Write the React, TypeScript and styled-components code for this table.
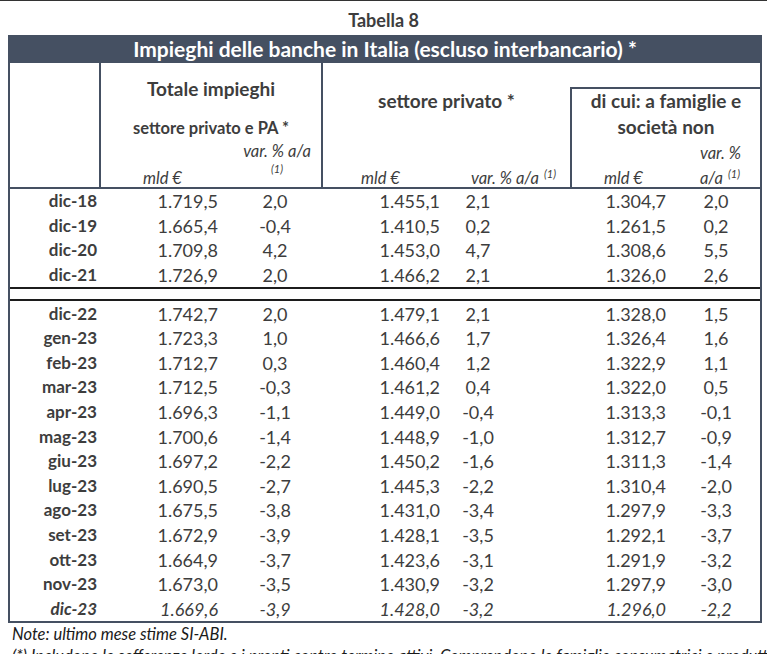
import React from 'react';
import styled, { createGlobalStyle } from 'styled-components';

const Global = createGlobalStyle`
  html, body { margin: 0; padding: 0; background: #ffffff; }
  body {
    font-family: Lato, "Open Sans", "DejaVu Sans", sans-serif;
    color: #404040;
  }
`;

const SLATE = '#455062';
const INK = '#3d3d3d';

const Page = styled.div`
  width: 767px;
  height: 654px;
  overflow: hidden;
  border-top: 1px solid #333;
  box-sizing: border-box;
`;

const Caption = styled.div`
  padding-top: 8px;
  height: 26px;
  line-height: 22px;
  text-align: center;
  font-weight: 700;
  font-size: 18px;
  color: ${INK};
`;

const Table = styled.div`
  margin-left: 8px;
  width: 754px;
  box-sizing: border-box;
  border: 2px solid ${SLATE};
  border-top: none;
`;

const TitleBar = styled.div`
  height: 28px;
  line-height: 28px;
  background: ${SLATE};
  color: #ffffff;
  text-align: center;
  font-weight: 700;
  font-size: 21px;
`;

const Header = styled.div`
  display: grid;
  grid-template-columns: 89px 222px 249px 1fr;
  height: 124px;
  border-bottom: 2px solid ${SLATE};
`;

const HeadCol = styled.div<{ $padTop?: number; $boxed?: boolean }>`
  display: flex;
  flex-direction: column;
  border-left: 2px solid ${SLATE};
  padding-top: ${(p) => p.$padTop ?? 0}px;
  margin-top: ${(p) => (p.$boxed ? 24 : 0)}px;
  border-top: ${(p) => (p.$boxed ? `2px solid ${SLATE}` : 'none')};
  min-width: 0;
`;

const HeadTitle = styled.div<{ $mt?: number; $size?: number }>`
  margin-top: ${(p) => p.$mt ?? 0}px;
  height: 24px;
  line-height: 24px;
  text-align: center;
  font-weight: 700;
  font-size: ${(p) => p.$size ?? 19}px;
  color: ${INK};
  white-space: nowrap;
`;

const UnitRow = styled.div<{ $pl: number; $pr: number }>`
  flex: 1;
  display: flex;
  justify-content: space-between;
  align-items: flex-end;
  padding: 0 ${(p) => p.$pr}px 0 ${(p) => p.$pl}px;
`;

const Unit = styled.span`
  font-style: italic;
  font-size: 16.5px;
  line-height: 18px;
  white-space: nowrap;
  color: ${INK};
`;

const VarStack = styled.div`
  align-self: flex-start;
  display: flex;
  flex-direction: column;
  align-items: center;
  padding-top: 2px;
`;

const SupLine = styled.span`
  margin-top: 3px;
  font-style: italic;
  font-size: 11px;
  line-height: 12px;
  color: ${INK};
`;

const Sup = styled.sup`
  font-size: 11px;
  margin-left: 5px;
  vertical-align: 6px;
  line-height: 0;
`;

const RightLine = styled.div<{ $mt: number; $pr: number }>`
  margin-top: ${(p) => p.$mt}px;
  padding-right: ${(p) => p.$pr}px;
  text-align: right;
`;

const Row = styled.div<{ $italic?: boolean }>`
  display: grid;
  grid-template-columns: 90px 130px 90px 130px 56px 174px 72px 1fr;
  align-items: center;
  height: 24.6px;
  font-size: 18px;
  line-height: 22px;
  color: ${INK};
  font-style: ${(p) => (p.$italic ? 'italic' : 'normal')};
`;

const Label = styled.span`
  text-align: right;
  padding-right: 3px;
  font-weight: 700;
  font-size: 17px;
`;

const Num = styled.span<{ $pr: number }>`
  text-align: right;
  padding-right: ${(p) => p.$pr}px;
`;

const Pct = styled.span`
  text-align: center;
`;

const Separator = styled.div`
  height: 10px;
  border-top: 2px solid #1c1c1c;
  border-bottom: 2px solid #1c1c1c;
`;

const Notes = styled.div`
  padding-left: 12px;
  font-style: italic;
  font-size: 16.5px;
  line-height: 22px;
  color: #1a1a1a;
  white-space: nowrap;
  overflow: hidden;
`;

type R = [string, string, string, string, string, string, string];

const top: R[] = [
  ['dic-18', '1.719,5', '2,0', '1.455,1', '2,1', '1.304,7', '2,0'],
  ['dic-19', '1.665,4', '-0,4', '1.410,5', '0,2', '1.261,5', '0,2'],
  ['dic-20', '1.709,8', '4,2', '1.453,0', '4,7', '1.308,6', '5,5'],
  ['dic-21', '1.726,9', '2,0', '1.466,2', '2,1', '1.326,0', '2,6'],
];

const bottom: R[] = [
  ['dic-22', '1.742,7', '2,0', '1.479,1', '2,1', '1.328,0', '1,5'],
  ['gen-23', '1.723,3', '1,0', '1.466,6', '1,7', '1.326,4', '1,6'],
  ['feb-23', '1.712,7', '0,3', '1.460,4', '1,2', '1.322,9', '1,1'],
  ['mar-23', '1.712,5', '-0,3', '1.461,2', '0,4', '1.322,0', '0,5'],
  ['apr-23', '1.696,3', '-1,1', '1.449,0', '-0,4', '1.313,3', '-0,1'],
  ['mag-23', '1.700,6', '-1,4', '1.448,9', '-1,0', '1.312,7', '-0,9'],
  ['giu-23', '1.697,2', '-2,2', '1.450,2', '-1,6', '1.311,3', '-1,4'],
  ['lug-23', '1.690,5', '-2,7', '1.445,3', '-2,2', '1.310,4', '-2,0'],
  ['ago-23', '1.675,5', '-3,8', '1.431,0', '-3,4', '1.297,9', '-3,3'],
  ['set-23', '1.672,9', '-3,9', '1.428,1', '-3,5', '1.292,1', '-3,7'],
  ['ott-23', '1.664,9', '-3,7', '1.423,6', '-3,1', '1.291,9', '-3,2'],
  ['nov-23', '1.673,0', '-3,5', '1.430,9', '-3,2', '1.297,9', '-3,0'],
  ['dic-23', '1.669,6', '-3,9', '1.428,0', '-3,2', '1.296,0', '-2,2'],
];

const DataRow: React.FC<{ r: R; italic?: boolean }> = ({ r, italic }) => (
  <Row $italic={italic}>
    <Label>{r[0]}</Label>
    <Num $pr={12}>{r[1]}</Num>
    <Pct>{r[2]}</Pct>
    <Num $pr={10}>{r[3]}</Num>
    <Pct>{r[4]}</Pct>
    <Num $pr={14}>{r[5]}</Num>
    <Pct>{r[6]}</Pct>
    <span />
  </Row>
);

export default function App() {
  return (
    <Page>
      <Global />
      <Caption>Tabella 8</Caption>
      <Table>
        <TitleBar>Impieghi delle banche in Italia (escluso interbancario) *</TitleBar>
        <Header>
          <div />
          <HeadCol $padTop={14}>
            <HeadTitle>Totale impieghi</HeadTitle>
            <HeadTitle $mt={15} $size={16.5}>
              settore privato e PA *
            </HeadTitle>
            <UnitRow $pl={42} $pr={10}>
              <Unit>mld €</Unit>
              <VarStack>
                <Unit>var. % a/a</Unit>
                <SupLine>(1)</SupLine>
              </VarStack>
            </UnitRow>
          </HeadCol>
          <HeadCol $padTop={26}>
            <HeadTitle>settore privato *</HeadTitle>
            <UnitRow $pl={38} $pr={14}>
              <Unit>mld €</Unit>
              <Unit>
                var. % a/a<Sup>(1)</Sup>
              </Unit>
            </UnitRow>
          </HeadCol>
          <HeadCol $boxed>
            <HeadTitle>di cui: a famiglie e</HeadTitle>
            <HeadTitle $mt={2}>società non</HeadTitle>
            <RightLine $mt={4} $pr={19}>
              <Unit>var. %</Unit>
            </RightLine>
            <UnitRow $pl={32} $pr={20}>
              <Unit>mld €</Unit>
              <Unit>
                a/a<Sup>(1)</Sup>
              </Unit>
            </UnitRow>
          </HeadCol>
        </Header>
        {top.map((r) => (
          <DataRow key={r[0]} r={r} />
        ))}
        <Separator />
        {bottom.map((r, i) => (
          <DataRow key={r[0]} r={r} italic={i === bottom.length - 1} />
        ))}
      </Table>
      <Notes>Note: ultimo mese stime SI-ABI.</Notes>
      <Notes>
        (*) Includono le sofferenze lorde e i pronti contro termine attivi. Comprendono le famiglie consumatrici e produttrici
      </Notes>
    </Page>
  );
}
